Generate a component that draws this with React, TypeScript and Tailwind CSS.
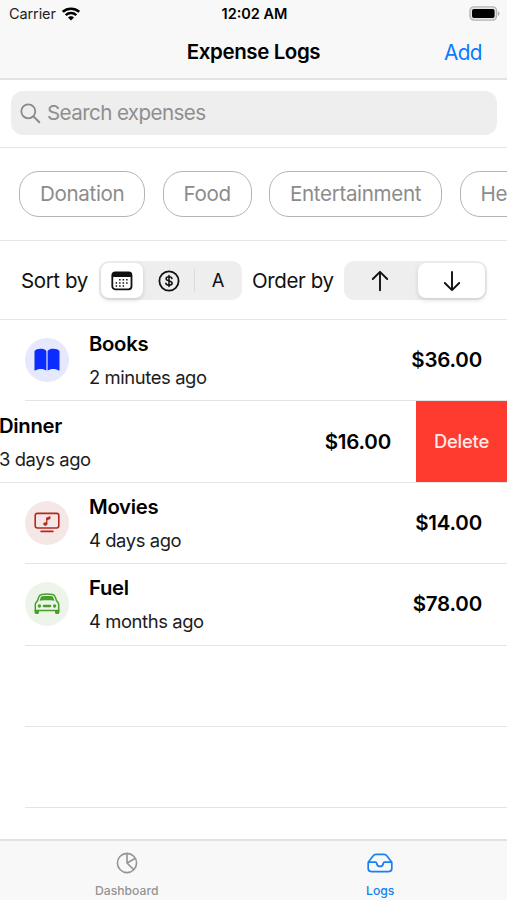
import type { ReactNode } from "react";

const chips = [
  { name: "Donation", size: "w-[126px]" },
  { name: "Food", size: "w-[89px]" },
  { name: "Entertainment", size: "w-[173px]" },
  { name: "Health", size: "w-[107px]" },
];

function WifiIcon() {
  return (
    <svg width="18" height="14" viewBox="0 0 18 14" fill="none" stroke="#000">
      <path d="M0.8 4.9C5.3 0.7 12.7 0.7 17.2 4.9" strokeWidth="2.6" />
      <path d="M3.7 8.1C6.7 5.3 11.3 5.3 14.3 8.1" strokeWidth="2.4" />
      <path d="M9 13.4L6 10.5C7.5 8.9 10.5 8.9 12 10.5Z" fill="#000" stroke="none" />
    </svg>
  );
}

function BatteryIcon() {
  return (
    <svg width="31" height="15" viewBox="0 0 31 15">
      <rect x="1" y="0.9" width="26.6" height="13.2" rx="4" fill="#e4e4e4" stroke="#b4b4b4" strokeWidth="1.4" />
      <rect x="3" y="3" width="22.6" height="9" rx="2" fill="#000" />
      <path d="M29 5.2C31 6 31 9 29 9.8Z" fill="#a9a9a9" />
    </svg>
  );
}

function SearchIcon() {
  return (
    <svg width="21" height="21" viewBox="0 0 21 21" fill="none" stroke="#8a8a8e" strokeWidth="1.8" strokeLinecap="round">
      <circle cx="8.3" cy="8.3" r="7" />
      <path d="M13.4 13.4L19.3 19.3" strokeWidth="2" />
    </svg>
  );
}

function CalendarIcon() {
  return (
    <svg width="22" height="20" viewBox="0 0 22 20">
      <rect x="1.3" y="1.3" width="19.2" height="17" rx="3" fill="none" stroke="#111" strokeWidth="1.8" />
      <path d="M1 6V4C1 2 2 1 4 1H18C20 1 21 2 21 4V6Z" fill="#111" />
      <g stroke="#111" strokeWidth="1.5" strokeDasharray="1.5 2">
        <path d="M8.1 8.8H17.6" />
        <path d="M4.6 11.9H17.6" />
        <path d="M4.6 15H14" />
      </g>
    </svg>
  );
}

function DollarIcon() {
  return (
    <svg width="22" height="22" viewBox="0 0 22 22" fill="none" stroke="#111" strokeLinecap="round">
      <circle cx="11" cy="11" r="9.6" strokeWidth="1.8" />
      <path d="M14 8.6C13.8 7.3 12.6 6.7 11 6.7C9.3 6.7 8.1 7.5 8.1 8.8C8.1 11.7 14.2 10.1 14.2 13.1C14.2 14.5 12.9 15.3 11.1 15.3C9.2 15.3 8 14.6 7.8 13.2M11 5.4V16.6" strokeWidth="1.5" />
    </svg>
  );
}

function ArrowIcon({ down }: { down?: boolean }) {
  return (
    <svg width="18" height="22" viewBox="0 0 18 22" fill="none" stroke="#111" strokeWidth="1.9" strokeLinecap="round" strokeLinejoin="round">
      {down ? <path d="M9 2V20M1.8 13L9 20.2L16.2 13" /> : <path d="M9 20.2V2M1.8 9L9 1.8L16.2 9" />}
    </svg>
  );
}

function BookIcon() {
  return (
    <svg width="26" height="24" viewBox="0 0 26 24" fill="#0a2cff">
      <path d="M0.5 3.2C2.5 0.3 10 0 12.4 2.9V22.6C10 20.4 3.5 20.4 1.2 22.6C0.8 22.8 0.5 22.6 0.5 22Z" />
      <path d="M25.5 3.2C23.5 0.3 16 0 13.6 2.9V22.6C16 20.4 22.5 20.4 24.8 22.6C25.2 22.8 25.5 22.6 25.5 22Z" />
    </svg>
  );
}

function TvMusicIcon() {
  return (
    <svg width="26" height="22" viewBox="0 0 26 22" fill="none" stroke="#b5281e" strokeWidth="1.6" strokeLinecap="round">
      <rect x="1.2" y="1.4" width="23.6" height="14.6" rx="2.2" />
      <path d="M7.2 19.4H18.8" strokeWidth="1.8" />
      <path d="M12.8 11.6V6.4" strokeWidth="1.3" />
      <path d="M12.2 5.8L16.4 4V7L12.2 8.6Z" fill="#b5281e" stroke="none" />
      <ellipse cx="11.3" cy="12" rx="2.1" ry="1.7" fill="#b5281e" stroke="none" />
    </svg>
  );
}

function CarIcon() {
  return (
    <svg width="26" height="22" viewBox="0 0 26 22" fill="none" stroke="#4a9e2c">
      <path d="M1.3 17.4V11.6C1.3 10 2 9.2 3.2 8.2L5 3.6C5.5 2.2 6.3 1.6 7.8 1.4C11 1 15 1 18.2 1.4C19.7 1.6 20.5 2.2 21 3.6L22.8 8.2C24 9.2 24.7 10 24.7 11.6V17.4Z" strokeWidth="1.5" />
      <path d="M6.8 4.2C7 3.6 7.3 3.4 8 3.3C11 2.9 15 2.9 18 3.3C18.7 3.4 19 3.6 19.2 4.2L20.5 7.7C15.5 7.1 10.5 7.1 5.5 7.7Z" fill="#4a9e2c" stroke="none" />
      <circle cx="5.4" cy="13" r="1.7" fill="#4a9e2c" stroke="none" />
      <circle cx="20.6" cy="13" r="1.7" fill="#4a9e2c" stroke="none" />
      <path d="M10 13H16" strokeWidth="2.6" strokeLinecap="round" />
      <path d="M0.6 17H5V19.6C5 21.6 0.6 21.6 0.6 19.6ZM21 17H25.4V19.6C25.4 21.6 21 21.6 21 19.6Z" fill="#4a9e2c" stroke="none" />
    </svg>
  );
}

function PieIcon() {
  return (
    <svg width="22" height="22" viewBox="0 0 22 22" fill="none" stroke="#949494" strokeWidth="1.6" strokeLinejoin="round">
      <circle cx="11" cy="11" r="9.6" />
      <path d="M11 1.4V11L17.8 17.8M11 11L19.4 6.3" />
    </svg>
  );
}

function TrayIcon() {
  return (
    <svg width="26" height="20" viewBox="0 0 26 20" fill="none" stroke="#1680f5" strokeWidth="1.7" strokeLinejoin="round">
      <path d="M1.2 9.2V15.6C1.2 17.6 2.2 18.6 4.2 18.6H21.8C23.8 18.6 24.8 17.6 24.8 15.6V9.2L20 3C19.2 1.8 18.4 1.3 17 1.3H9C7.6 1.3 6.8 1.8 6 3Z" />
      <path d="M1.2 9.2H8.6C9.4 9.2 9.6 9.8 9.7 10.5C10 12.2 11.3 13.4 13 13.4C14.7 13.4 16 12.2 16.3 10.5C16.4 9.8 16.6 9.2 17.4 9.2H24.8" />
    </svg>
  );
}

type LogRowProps = { name: string; time: string; amount: string; tint: string; icon: ReactNode };

function LogRow({ name, time, amount, tint, icon }: LogRowProps) {
  return (
    <li className="ml-[25px] flex h-[81.4px] items-center border-b border-[#e4e4e4] pr-[25px]">
      <div className={`mr-5 flex size-11 items-center justify-center rounded-full ${tint}`}>{icon}</div>
      <LogText name={name} time={time} />
      <span className="mt-px ml-auto text-[20.5px] font-semibold tracking-[-0.2px]">{amount}</span>
    </li>
  );
}

function LogText({ name, time }: { name: string; time: string }) {
  return (
    <div className="pt-px whitespace-nowrap">
      <p className="mb-[9px] text-[20.3px] leading-6 font-semibold tracking-[-0.3px]">{name}</p>
      <p className="text-[18.4px] leading-6 tracking-[-0.4px] text-[#1c1c1c]">{time}</p>
    </div>
  );
}

export default function App() {
  return (
    <div className="flex h-[900px] w-[507px] flex-col overflow-hidden bg-white font-[Inter,sans-serif] text-black">
      <header className="h-[80px] shrink-0 border-b-2 border-[#e2e2e2] bg-[#f8f8f8]">
        <div className="grid h-[27px] grid-cols-3 items-center pr-[7px] pl-[9px] text-[14.5px]">
          <div className="flex items-center gap-1.5">
            <span className="tracking-[-0.1px] text-[#222]">Carrier</span>
            <WifiIcon />
          </div>
          <span className="text-center font-semibold">12:02 AM</span>
          <div className="flex justify-end">
            <BatteryIcon />
          </div>
        </div>
        <div className="grid h-[51px] grid-cols-3 items-center px-[25px] text-[20.8px]">
          <h1 className="col-start-2 text-center text-[20.5px] font-semibold tracking-[-0.4px] whitespace-nowrap">Expense Logs</h1>
          <button className="pt-px text-right tracking-[-0.6px] text-[#0a7cff]">Add</button>
        </div>
      </header>

      <div className="h-[68px] shrink-0 border-b border-[#e6e6e6] pt-[11px] pr-[10px] pl-[11px]">
        <div className="flex h-[44px] items-center gap-[6px] rounded-xl bg-[#eeeeee] pl-[9px]">
          <SearchIcon />
          <span className="text-[20.6px] tracking-[-0.6px] text-[#8e8e90]">Search expenses</span>
        </div>
      </div>

      <div className="flex h-[93px] shrink-0 items-center gap-[17.5px] overflow-hidden border-b border-[#e6e6e6] pl-[19px]">
        {chips.map((chip) => (
          <button
            key={chip.name}
            className={`h-[46px] shrink-0 rounded-[20px] border-[1.3px] border-[#b4b4b4] pt-px pl-5 text-left text-[20.6px] tracking-[-0.35px] text-[#8c8c8c] ${chip.size}`}
          >
            {chip.name}
          </button>
        ))}
      </div>

      <div className="flex h-[79px] shrink-0 items-center border-b border-[#e6e6e6] pt-px pl-[21px] text-[20.5px] tracking-[-0.4px] text-[#111]">
        <span className="w-[78px] pt-px whitespace-nowrap">Sort by</span>
        <div className="flex h-[39px] w-[143px] items-center rounded-[10px] bg-[#eeeeee] p-[2px]">
          <div className="flex h-[35px] w-[42px] items-center justify-center rounded-[8px] bg-white pr-px shadow-[0_2px_5px_rgba(0,0,0,0.14)]">
            <CalendarIcon />
          </div>
          <div className="flex w-[51px] justify-center pl-px">
            <DollarIcon />
          </div>
          <div className="h-[23px] w-px bg-[#dadada]" />
          <span className="flex-1 pl-px text-center text-[18.4px]">A</span>
        </div>
        <span className="ml-[10px] w-[92px] pt-px whitespace-nowrap">Order by</span>
        <div className="flex h-[39px] w-[143px] items-center rounded-[10px] bg-[#eeeeee] p-[2px]">
          <div className="flex flex-1 justify-center pr-[5px]">
            <ArrowIcon />
          </div>
          <div className="flex h-[35px] w-[67px] items-center justify-center rounded-[8px] bg-white shadow-[0_2px_5px_rgba(0,0,0,0.14)]">
            <ArrowIcon down />
          </div>
        </div>
      </div>

      <ul className="min-h-0 flex-1 overflow-hidden">
        <LogRow name="Books" time="2 minutes ago" amount="$36.00" tint="bg-[#e6e8fe]" icon={<BookIcon />} />
        {/* swiped row, its left side is off screen */}
        <li className="flex h-[81.4px] items-center border-b border-[#e4e4e4]">
          <div className="-ml-px">
            <LogText name="Dinner" time="3 days ago" />
          </div>
          <span className="mt-px mr-[25px] ml-auto text-[20.5px] font-semibold tracking-[-0.2px]">$16.00</span>
          <button className="h-full w-[91px] bg-[#ff3b30] text-[18.4px] font-medium tracking-[-0.2px] text-[#ffe9e7]">Delete</button>
        </li>
        <LogRow name="Movies" time="4 days ago" amount="$14.00" tint="bg-[#f6e7e7]" icon={<TvMusicIcon />} />
        <LogRow name="Fuel" time="4 months ago" amount="$78.00" tint="bg-[#edf5ea]" icon={<CarIcon />} />
        <li className="ml-[25px] h-[81.4px] border-b border-[#e4e4e4]" />
        <li className="ml-[25px] h-[81.4px] border-b border-[#e4e4e4]" />
      </ul>

      <nav className="grid h-[61px] shrink-0 grid-cols-2 border-t-2 border-[#e2e2e2] bg-[#f8f8f8] text-[12.2px] font-medium">
        <div className="flex flex-col items-center pt-[11px] text-[#949494]">
          <PieIcon />
          <span className="mt-[9px] leading-4">Dashboard</span>
        </div>
        <div className="flex flex-col items-center pt-[12px] text-[#1680f5]">
          <TrayIcon />
          <span className="mt-[10px] leading-4">Logs</span>
        </div>
      </nav>
    </div>
  );
}
